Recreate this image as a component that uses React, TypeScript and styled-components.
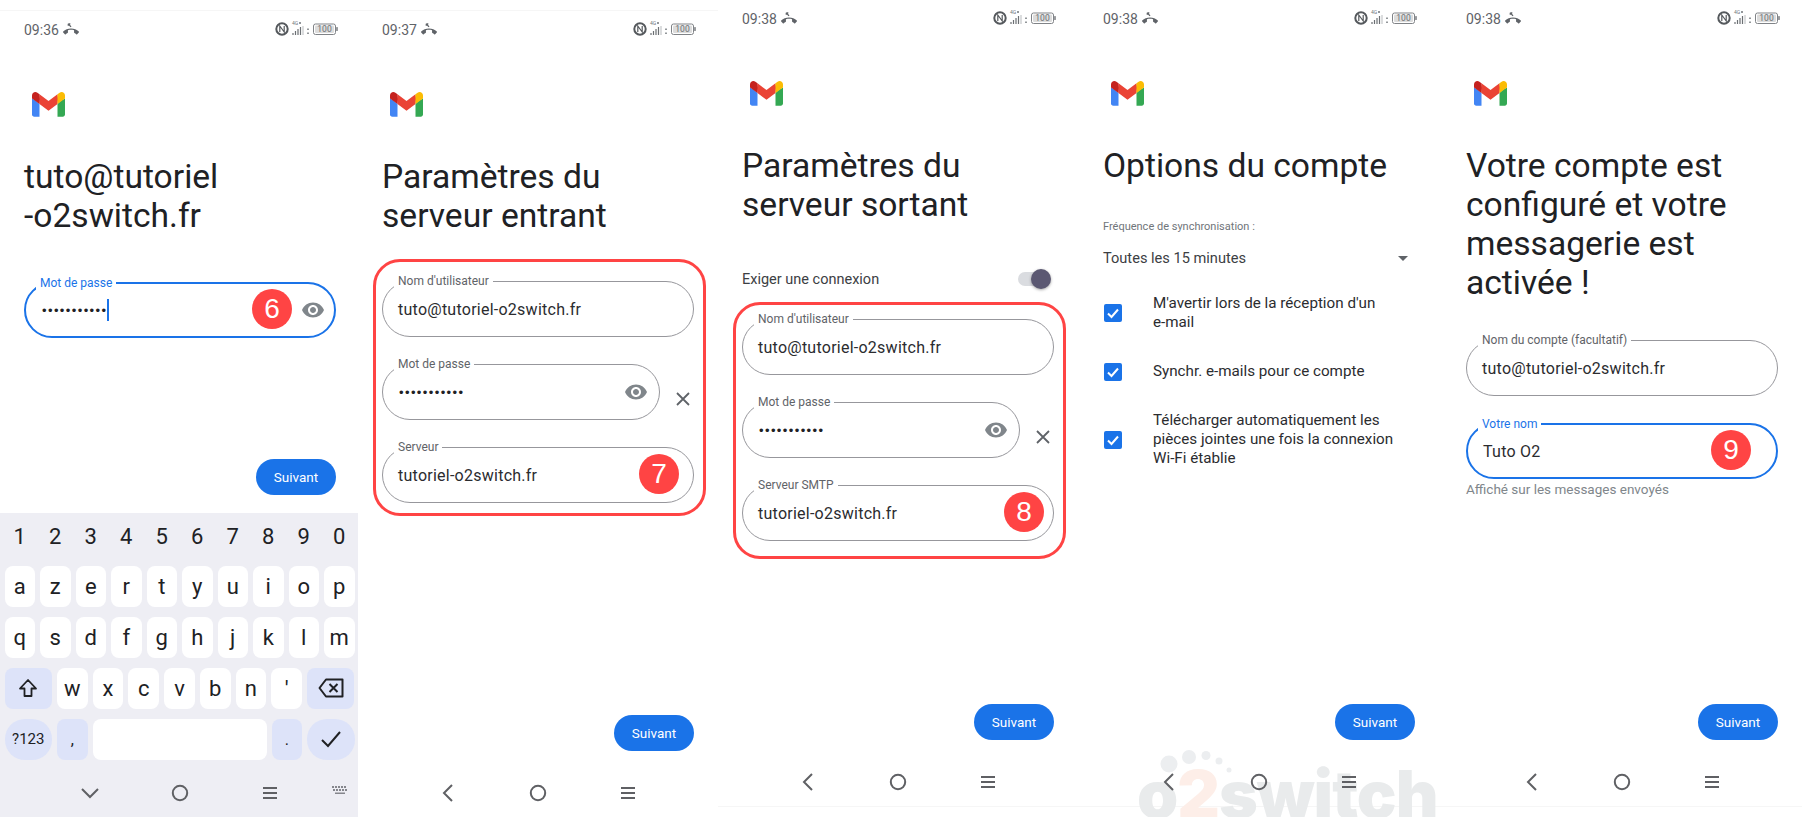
import React from 'react';
import styled, { createGlobalStyle } from 'styled-components';

const GlobalStyle = createGlobalStyle`
  html, body {
    margin: 0;
    padding: 0;
    background: #fff;
  }
  body {
    font-family: Roboto, "Liberation Sans", sans-serif;
    color: #202124;
  }
`;

const Page = styled.div`
  display: flex;
  align-items: flex-start;
  width: 1802px;
  height: 817px;
  overflow: hidden;
  background: #fff;
`;

const Phone = styled.section<{ $width: number; $low?: boolean }>`
  position: relative;
  display: flex;
  flex-direction: column;
  flex: none;
  width: ${(p) => p.$width}px;
  height: 806px;
  margin-top: ${(p) => (p.$low ? 11 : 0)}px;
  box-shadow: 0 ${(p) => (p.$low ? -1 : 1)}px 0 #f6f6f6;
`;

const Body = styled.div`
  display: flex;
  flex-direction: column;
  flex: 1;
  width: 312px;
  margin-left: 24px;
`;

const StatusBar = styled.div`
  display: flex;
  align-items: center;
  justify-content: space-between;
  width: 314px;
  height: 38px;
  font-size: 14px;
  color: #5f6368;
`;

const StatusLeft = styled.div`
  display: flex;
  align-items: center;
  gap: 4px;
`;

const Logo = styled.svg`
  display: block;
  width: 33px;
  height: 25px;
  margin: 43px 0 0 8px;
`;

const Title = styled.h1`
  margin: 40px 0 0;
  font-size: 33.6px;
  line-height: 39px;
  font-weight: 400;
  color: #202124;
  letter-spacing: 0;
`;

const FieldBox = styled.div<{ $focused?: boolean; $width?: number }>`
  position: relative;
  display: flex;
  align-items: center;
  flex: none;
  box-sizing: border-box;
  width: ${(p) => p.$width ?? 312}px;
  height: 56px;
  padding: 0 15px;
  border: ${(p) => (p.$focused ? '2px solid #1a73e8' : '1.5px solid #97979c')};
  border-radius: 28px;
`;

const FieldLabel = styled.label<{ $focused?: boolean }>`
  position: absolute;
  top: -8px;
  left: ${(p) => (p.$focused ? 10 : 11)}px;
  padding: 0 4px;
  background: #fff;
  font-size: 12px;
  line-height: 14px;
  color: ${(p) => (p.$focused ? '#1a73e8' : '#5f6368')};
`;

const FieldValue = styled.span`
  font-size: 16px;
  letter-spacing: 0.25px;
  color: #2b2c2f;
`;

const Dots = styled.span`
  margin-left: 1px;
  font-family: "Liberation Sans", sans-serif;
  font-size: 13px;
  letter-spacing: 1.4px;
  color: #202124;
`;

const Caret = styled.span`
  display: inline-block;
  width: 2px;
  height: 22px;
  background: #1a73e8;
`;

const EyeIcon = styled.svg<{ $focused?: boolean }>`
  position: absolute;
  right: ${(p) => (p.$focused ? 9 : 11)}px;
  top: 50%;
  width: 24px;
  height: 24px;
  margin-top: -12px;
  fill: #80868b;
`;

const Badge = styled.span<{ $right: number }>`
  position: absolute;
  top: 50%;
  right: ${(p) => p.$right}px;
  display: flex;
  align-items: center;
  justify-content: center;
  width: 40px;
  height: 40px;
  margin-top: -21px;
  border-radius: 50%;
  background: #ff4444;
  color: #fff;
  font-family: "Liberation Sans", sans-serif;
  font-size: 28px;
`;

const RedBox = styled.div<{ $top: number; $inset: number }>`
  display: flex;
  flex-direction: column;
  gap: 27px;
  flex: none;
  box-sizing: border-box;
  width: 333px;
  height: 257px;
  margin: ${(p) => p.$top}px 0 0 -9px;
  padding: ${(p) => p.$inset}px 0 0 6px;
  border: 3px solid #ff4444;
  border-radius: 27px;
`;

const PasswordRow = styled.div`
  display: flex;
  align-items: center;
`;

const ClearIcon = styled.svg`
  width: 16px;
  height: 16px;
  margin: 14px 0 0 15px;
  stroke: #5f6368;
  stroke-width: 1.8;
  fill: none;
`;

const ToggleRow = styled.div`
  display: flex;
  align-items: center;
  justify-content: space-between;
  height: 24px;
  margin-top: 43px;
  font-size: 14.5px;
  color: #3c4043;
`;

const ToggleTrack = styled.div`
  position: relative;
  width: 30px;
  height: 14px;
  margin-right: 6px;
  border-radius: 7px;
  background: #dadce0;
`;

const ToggleThumb = styled.div`
  position: absolute;
  top: -3px;
  right: -3px;
  width: 20px;
  height: 20px;
  border-radius: 50%;
  background: #5b5872;
  box-shadow: 0 1px 3px rgba(0, 0, 0, 0.35);
`;

const SmallLabel = styled.div`
  margin-top: 35px;
  font-size: 11px;
  line-height: 14px;
  color: #70757a;
`;

const SelectRow = styled.div`
  display: flex;
  align-items: center;
  justify-content: space-between;
  height: 24px;
  margin-top: 12px;
  padding-right: 7px;
  font-size: 14.6px;
  color: #3c4043;
`;

const SelectArrow = styled.span`
  width: 0;
  height: 0;
  border-left: 5px solid transparent;
  border-right: 5px solid transparent;
  border-top: 5px solid #5f6368;
`;

const CheckList = styled.div`
  display: flex;
  flex-direction: column;
  gap: 30px;
  margin-top: 24px;
`;

const CheckRow = styled.div`
  display: flex;
  align-items: center;
  padding-left: 1px;
`;

const CheckBox = styled.div`
  display: flex;
  align-items: center;
  justify-content: center;
  flex: none;
  width: 18px;
  height: 18px;
  margin-right: 31px;
  border-radius: 2px;
  background: #1a73e8;
`;

const CheckText = styled.div`
  width: 245px;
  font-size: 15.2px;
  line-height: 19px;
  color: #2b2c2f;
`;

const Hint = styled.div`
  margin-top: 2px;
  font-size: 13.5px;
  line-height: 17px;
  color: #80868b;
`;

const FieldStack = styled.div<{ $top: number }>`
  display: flex;
  flex-direction: column;
  gap: 27px;
  margin-top: ${(p) => p.$top}px;
`;

const NextButton = styled.button`
  align-self: flex-end;
  flex: none;
  width: 80px;
  height: 36px;
  margin: auto 0 18px;
  padding: 0;
  border: 0;
  border-radius: 18px;
  background: #1a73e8;
  color: #fff;
  font-family: Roboto, sans-serif;
  font-size: 13.5px;
  font-weight: 400;
`;

const NavBar = styled.nav`
  position: relative;
  z-index: 1;
  display: grid;
  grid-template-columns: repeat(3, 90px);
  justify-items: center;
  align-items: center;
  flex: none;
  height: 48px;
  padding-left: 45px;
`;

const NavIcon = styled.svg`
  width: 20px;
  height: 20px;
  fill: none;
  stroke: #5f6064;
  stroke-width: 2;
`;

const KeyboardIcon = styled.svg`
  position: absolute;
  top: 16px;
  right: 10px;
  width: 16px;
  height: 12px;
  fill: #85868c;
`;

const Keyboard = styled.div`
  display: flex;
  flex-direction: column;
  flex: none;
  box-sizing: border-box;
  width: 358px;
  height: 304px;
  background: #eeeef4;
`;

const NumberRow = styled.div`
  display: grid;
  grid-template-columns: repeat(10, 1fr);
  gap: 5px;
  align-items: center;
  height: 46px;
  margin-bottom: 7px;
  padding: 0 3.5px 0 4.5px;
  font-size: 22px;
  text-align: center;
  color: #202124;
`;

const KeyRows = styled.div`
  display: flex;
  flex-direction: column;
  gap: 10.5px;
  padding: 0 3.5px 0 4.5px;
  height: 203px;
`;

const KeyRow = styled.div<{ $columns: string }>`
  display: grid;
  grid-template-columns: ${(p) => p.$columns};
  gap: 5px;
  height: 40.5px;
`;

const Key = styled.div<{ $tone?: 'white' | 'blue'; $pill?: boolean; $size?: number }>`
  display: flex;
  align-items: center;
  justify-content: center;
  border-radius: ${(p) => (p.$pill ? '20px' : '8px')};
  background: ${(p) => (p.$tone === 'blue' ? '#dde3f9' : '#fff')};
  font-size: ${(p) => p.$size ?? 22}px;
  color: #202124;
`;

const Watermark = styled.div`
  position: absolute;
  left: 58px;
  top: 750px;
  width: 310px;
  height: 67px;
`;

const WatermarkDots = styled.svg`
  position: absolute;
  left: 0;
  top: 0;
  width: 310px;
  height: 40px;
  fill: #eceef0;
`;

const WatermarkText = styled.div`
  position: absolute;
  left: 0;
  top: 0;
  font-family: Inter, sans-serif;
  font-weight: 900;
  font-size: 66px;
  line-height: 88px;
  letter-spacing: -1px;
  color: #e9ebec;
  white-space: nowrap;
`;

const WatermarkTwo = styled.span`
  color: #fdeee8;
`;

const Gmail = () => (
  <Logo viewBox="0 0 256 193">
    <path fill="#4285F4" d="M58.182 192.05V93.14L27.507 65.077 0 49.504v125.091c0 9.658 7.825 17.455 17.455 17.455h40.727Z" />
    <path fill="#34A853" d="M197.818 192.05h40.727c9.659 0 17.455-7.826 17.455-17.455V49.505l-31.156 17.837-27.026 25.798v98.91Z" />
    <path fill="#EA4335" d="m58.182 93.14-4.174-38.647 4.174-36.989L128 69.868l69.818-52.364 4.669 34.992-4.669 40.644L128 145.504z" />
    <path fill="#FBBC04" d="M197.818 17.504V93.14L256 49.504V26.231c0-21.585-24.64-33.89-41.89-20.945l-16.292 12.218Z" />
    <path fill="#C5221F" d="m0 49.504 26.759 20.07L58.182 93.14V17.504L41.89 5.286C24.61-7.66 0 4.646 0 26.23v23.273Z" />
  </Logo>
);

const Status = ({ time }: { time: string }) => (
  <StatusBar>
    <StatusLeft>
      {time}
      <svg width="16" height="15" viewBox="0 0 24 22" fill="#5f6368">
        <path d="M12 10c-1.6 0-3.15.25-4.6.72v3.1c0 .39-.23.74-.56.9-.98.49-1.87 1.12-2.66 1.85-.18.18-.43.28-.7.28-.28 0-.53-.11-.71-.29L.29 14.08c-.18-.17-.29-.42-.29-.7 0-.28.11-.53.29-.71C3.34 9.78 7.46 8 12 8s8.66 1.78 11.71 4.67c.18.18.29.43.29.71 0 .28-.11.53-.29.71l-2.48 2.48c-.18.18-.43.29-.71.29-.27 0-.52-.11-.7-.28-.79-.74-1.69-1.36-2.67-1.85-.33-.16-.56-.5-.56-.9v-3.1C15.15 10.25 13.6 10 12 10z" />
        <path d="M8 1l4 4.5M8 1v3M8 1h3" stroke="#5f6368" strokeWidth="2" fill="none" />
      </svg>
    </StatusLeft>
    <svg width="64" height="20" viewBox="0 0 64 20">
      <circle cx="8" cy="9" r="5.7" fill="none" stroke="#55595d" strokeWidth="2" />
      <path d="M5.8 12V6l4.4 6V6" fill="none" stroke="#55595d" strokeWidth="1.2" />
      <text x="18" y="4.5" fontSize="5" fill="#70757a">4G</text>
      <circle cx="26" cy="3" r="1" fill="#70757a" />
      <path d="M19 15v-2M21.5 15v-4M24 15v-6M26.5 15v-8" stroke="#6b6f73" strokeWidth="1.2" />
      <path d="M29 15V6" stroke="#c4c6c9" strokeWidth="1.2" />
      <path d="M34 8.5v1.5M34 12.5v1.5" stroke="#70757a" strokeWidth="1.5" />
      <rect x="39.5" y="4" width="22" height="10.5" rx="2" fill="none" stroke="#808387" />
      <rect x="41" y="5.5" width="19" height="7.5" rx="1" fill="#dcdcdc" />
      <text x="50.5" y="12.4" fontSize="8.5" textAnchor="middle" fill="#6b6f73">100</text>
      <rect x="62.2" y="7" width="1.6" height="4" rx="0.6" fill="#808387" />
    </svg>
  </StatusBar>
);

type FieldProps = {
  label: string;
  value?: string;
  secret?: boolean;
  focused?: boolean;
  width?: number;
  badge?: string;
  badgeRight?: number;
};

const Field = ({ label, value, secret, focused, width, badge, badgeRight }: FieldProps) => (
  <FieldBox $focused={focused} $width={width}>
    <FieldLabel $focused={focused}>{label}</FieldLabel>
    {secret ? <Dots>•••••••••••</Dots> : <FieldValue>{value}</FieldValue>}
    {secret && focused && <Caret />}
    {secret && (
      <EyeIcon viewBox="0 0 24 24" $focused={focused}>
        <path d="M12 4.5C7 4.5 2.73 7.61 1 12c1.73 4.39 6 7.5 11 7.5s9.27-3.11 11-7.5c-1.73-4.39-6-7.5-11-7.5zM12 17c-2.76 0-5-2.24-5-5s2.24-5 5-5 5 2.24 5 5-2.24 5-5 5zm0-8c-1.66 0-3 1.34-3 3s1.34 3 3 3 3-1.34 3-3-1.34-3-3-3z" />
      </EyeIcon>
    )}
    {badge && <Badge $right={badgeRight ?? 10}>{badge}</Badge>}
  </FieldBox>
);

const Nav = ({ keyboard }: { keyboard?: boolean }) => (
  <NavBar>
    <NavIcon viewBox="0 0 20 20">
      {keyboard ? <path d="M2 6l8 8 8-8" /> : <path d="M14 2l-8 8 8 8" />}
    </NavIcon>
    <NavIcon viewBox="0 0 20 20">
      <circle cx="10" cy="10" r="7.2" />
    </NavIcon>
    <NavIcon viewBox="0 0 20 20">
      <path d="M3 5h14M3 10h14M3 15h14" />
    </NavIcon>
    {keyboard && (
      <KeyboardIcon viewBox="0 0 16 12">
        {[0, 3, 6, 9, 12].map((x) => (
          <rect key={x} x={x} y="1" width="2" height="2" />
        ))}
        {[1, 4, 7, 10, 13].map((x) => (
          <rect key={x} x={x} y="4" width="2" height="2" />
        ))}
        <rect x="3" y="7.5" width="10" height="1.5" />
      </KeyboardIcon>
    )}
  </NavBar>
);

const numbers = ['1', '2', '3', '4', '5', '6', '7', '8', '9', '0'];
const rowOne = ['a', 'z', 'e', 'r', 't', 'y', 'u', 'i', 'o', 'p'];
const rowTwo = ['q', 's', 'd', 'f', 'g', 'h', 'j', 'k', 'l', 'm'];
const rowThree = ['w', 'x', 'c', 'v', 'b', 'n', "'"];

const KeyboardPanel = () => (
  <Keyboard>
    <NumberRow>
      {numbers.map((n) => (
        <span key={n}>{n}</span>
      ))}
    </NumberRow>
    <KeyRows>
      <KeyRow $columns="repeat(10, 1fr)">
        {rowOne.map((k) => (
          <Key key={k}>{k}</Key>
        ))}
      </KeyRow>
      <KeyRow $columns="repeat(10, 1fr)">
        {rowTwo.map((k) => (
          <Key key={k}>{k}</Key>
        ))}
      </KeyRow>
      <KeyRow $columns="47.5px repeat(7, 1fr) 47.5px">
        <Key $tone="blue">
          <svg width="20" height="20" viewBox="0 0 20 20" fill="none" stroke="#202124" strokeWidth="1.8">
            <path d="M10 2l8 8.5h-4.5V18h-7v-7.5H2z" strokeLinejoin="round" />
          </svg>
        </Key>
        {rowThree.map((k) => (
          <Key key={k}>{k}</Key>
        ))}
        <Key $tone="blue">
          <svg width="26" height="20" viewBox="0 0 26 20" fill="none" stroke="#202124" strokeWidth="2">
            <path d="M8 1.5h16.5v17H8L1.5 10z" strokeLinejoin="round" />
            <path d="M11.5 6l8 8M19.5 6l-8 8" />
          </svg>
        </Key>
      </KeyRow>
      <KeyRow $columns="47.5px 30.5px 1fr 30.5px 47.5px">
        <Key $tone="blue" $pill $size={15}>
          ?123
        </Key>
        <Key $tone="blue" $size={16}>
          ,
        </Key>
        <Key />
        <Key $tone="blue" $size={16}>
          .
        </Key>
        <Key $tone="blue" $pill>
          <svg width="22" height="18" viewBox="0 0 22 18" fill="none" stroke="#202124" strokeWidth="2">
            <path d="M2 10l6 6L20 2" />
          </svg>
        </Key>
      </KeyRow>
    </KeyRows>
    <Nav keyboard />
  </Keyboard>
);

const CheckMark = () => (
  <svg width="14" height="14" viewBox="0 0 14 14" fill="none" stroke="#fff" strokeWidth="2">
    <path d="M2 7.5l3.5 3.5L12 3.5" />
  </svg>
);

const Check = ({ children }: { children: React.ReactNode }) => (
  <CheckRow>
    <CheckBox>
      <CheckMark />
    </CheckBox>
    <CheckText>{children}</CheckText>
  </CheckRow>
);

const App = () => (
  <Page>
    <GlobalStyle />

    <Phone $width={358} $low>
      <Body>
        <Status time="09:36" />
        <Gmail />
        <Title>
          tuto@tutoriel
          <br />
          -o2switch.fr
        </Title>
        <FieldStack $top={47}>
          <Field label="Mot de passe" secret focused badge="6" badgeRight={42} />
        </FieldStack>
        <NextButton>Suivant</NextButton>
      </Body>
      <KeyboardPanel />
    </Phone>

    <Phone $width={360} $low>
      <Body>
        <Status time="09:37" />
        <Gmail />
        <Title>
          Paramètres du
          <br />
          serveur entrant
        </Title>
        <RedBox $top={24} $inset={19}>
          <Field label="Nom d'utilisateur" value="tuto@tutoriel-o2switch.fr" />
          <PasswordRow>
            <Field label="Mot de passe" secret width={278} />
            <ClearIcon viewBox="0 0 16 16">
              <path d="M2 2l12 12M14 2L2 14" />
            </ClearIcon>
          </PasswordRow>
          <Field label="Serveur" value="tutoriel-o2switch.fr" badge="7" badgeRight={14} />
        </RedBox>
        <NextButton>Suivant</NextButton>
      </Body>
      <Nav />
    </Phone>

    <Phone $width={361}>
      <Body>
        <Status time="09:38" />
        <Gmail />
        <Title>
          Paramètres du
          <br />
          serveur sortant
        </Title>
        <ToggleRow>
          Exiger une connexion
          <ToggleTrack>
            <ToggleThumb />
          </ToggleTrack>
        </ToggleRow>
        <RedBox $top={11} $inset={14}>
          <Field label="Nom d'utilisateur" value="tuto@tutoriel-o2switch.fr" />
          <PasswordRow>
            <Field label="Mot de passe" secret width={278} />
            <ClearIcon viewBox="0 0 16 16">
              <path d="M2 2l12 12M14 2L2 14" />
            </ClearIcon>
          </PasswordRow>
          <Field label="Serveur SMTP" value="tutoriel-o2switch.fr" badge="8" badgeRight={9} />
        </RedBox>
        <NextButton>Suivant</NextButton>
      </Body>
      <Nav />
    </Phone>

    <Phone $width={363}>
      <Watermark>
        <WatermarkDots viewBox="0 0 310 40">
          <circle cx="32" cy="14" r="8.5" />
          <circle cx="52" cy="7" r="7" />
          <circle cx="69" cy="5.5" r="4.5" />
          <circle cx="82" cy="11" r="3.5" />
          <circle cx="92" cy="20" r="2.5" />
        </WatermarkDots>
        <WatermarkText>
          o<WatermarkTwo>2</WatermarkTwo>switch
        </WatermarkText>
      </Watermark>
      <Body>
        <Status time="09:38" />
        <Gmail />
        <Title>Options du compte</Title>
        <SmallLabel>Fréquence de synchronisation :</SmallLabel>
        <SelectRow>
          Toutes les 15 minutes
          <SelectArrow />
        </SelectRow>
        <CheckList>
          <Check>
            M'avertir lors de la réception d'un
            <br />
            e-mail
          </Check>
          <Check>Synchr. e-mails pour ce compte</Check>
          <Check>Télécharger automatiquement les pièces jointes une fois la connexion Wi-Fi établie</Check>
        </CheckList>
        <NextButton>Suivant</NextButton>
      </Body>
      <Nav />
    </Phone>

    <Phone $width={360}>
      <Body>
        <Status time="09:38" />
        <Gmail />
        <Title>
          Votre compte est
          <br />
          configuré et votre
          <br />
          messagerie est
          <br />
          activée !
        </Title>
        <FieldStack $top={38}>
          <Field label="Nom du compte (facultatif)" value="tuto@tutoriel-o2switch.fr" />
          <Field label="Votre nom" value="Tuto O2" focused badge="9" badgeRight={25} />
        </FieldStack>
        <Hint>Affiché sur les messages envoyés</Hint>
        <NextButton>Suivant</NextButton>
      </Body>
      <Nav />
    </Phone>
  </Page>
);

export default App;
